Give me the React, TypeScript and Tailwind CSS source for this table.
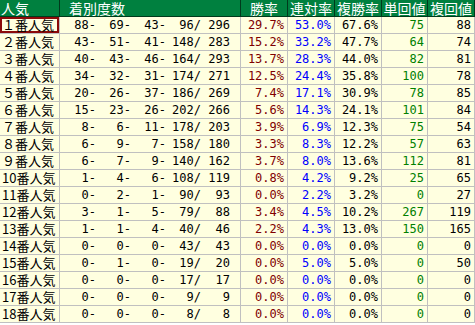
import React from 'react';

type Row = {
  label: string;
  counts: [number, number, number, number, number];
  win: string;
  ren: string;
  fuku: string;
  tan: number;
  fukuKai: number;
};

const rows: Row[] = [
  { label: '１番人気', counts: [88, 69, 43, 96, 296], win: '29.7%', ren: '53.0%', fuku: '67.6%', tan: 75, fukuKai: 88 },
  { label: '２番人気', counts: [43, 51, 41, 148, 283], win: '15.2%', ren: '33.2%', fuku: '47.7%', tan: 64, fukuKai: 74 },
  { label: '３番人気', counts: [40, 43, 46, 164, 293], win: '13.7%', ren: '28.3%', fuku: '44.0%', tan: 82, fukuKai: 81 },
  { label: '４番人気', counts: [34, 32, 31, 174, 271], win: '12.5%', ren: '24.4%', fuku: '35.8%', tan: 100, fukuKai: 78 },
  { label: '５番人気', counts: [20, 26, 37, 186, 269], win: '7.4%', ren: '17.1%', fuku: '30.9%', tan: 78, fukuKai: 85 },
  { label: '６番人気', counts: [15, 23, 26, 202, 266], win: '5.6%', ren: '14.3%', fuku: '24.1%', tan: 101, fukuKai: 84 },
  { label: '７番人気', counts: [8, 6, 11, 178, 203], win: '3.9%', ren: '6.9%', fuku: '12.3%', tan: 75, fukuKai: 54 },
  { label: '８番人気', counts: [6, 9, 7, 158, 180], win: '3.3%', ren: '8.3%', fuku: '12.2%', tan: 57, fukuKai: 63 },
  { label: '９番人気', counts: [6, 7, 9, 140, 162], win: '3.7%', ren: '8.0%', fuku: '13.6%', tan: 112, fukuKai: 81 },
  { label: '10番人気', counts: [1, 4, 6, 108, 119], win: '0.8%', ren: '4.2%', fuku: '9.2%', tan: 25, fukuKai: 65 },
  { label: '11番人気', counts: [0, 2, 1, 90, 93], win: '0.0%', ren: '2.2%', fuku: '3.2%', tan: 0, fukuKai: 27 },
  { label: '12番人気', counts: [3, 1, 5, 79, 88], win: '3.4%', ren: '4.5%', fuku: '10.2%', tan: 267, fukuKai: 119 },
  { label: '13番人気', counts: [1, 1, 4, 40, 46], win: '2.2%', ren: '4.3%', fuku: '13.0%', tan: 150, fukuKai: 165 },
  { label: '14番人気', counts: [0, 0, 0, 43, 43], win: '0.0%', ren: '0.0%', fuku: '0.0%', tan: 0, fukuKai: 0 },
  { label: '15番人気', counts: [0, 1, 0, 19, 20], win: '0.0%', ren: '5.0%', fuku: '5.0%', tan: 0, fukuKai: 50 },
  { label: '16番人気', counts: [0, 0, 0, 17, 17], win: '0.0%', ren: '0.0%', fuku: '0.0%', tan: 0, fukuKai: 0 },
  { label: '17番人気', counts: [0, 0, 0, 9, 9], win: '0.0%', ren: '0.0%', fuku: '0.0%', tan: 0, fukuKai: 0 },
  { label: '18番人気', counts: [0, 0, 0, 8, 8], win: '0.0%', ren: '0.0%', fuku: '0.0%', tan: 0, fukuKai: 0 },
];

const jp = "font-['MS_Gothic','Noto_Sans_CJK_JP',sans-serif]";
const mono = "font-['DejaVu_Sans_Mono','Liberation_Mono',monospace] text-[12px]";
const cols = 'grid grid-cols-[60px_181px_47px_47px_47px_46px_47px]';
const cell = 'h-[17px] border-r border-b border-[#c0c0c0] flex items-center';
const head =
  'h-[17px] border-r border-b border-[#003a1c] flex items-center text-white text-[14px] leading-[16px]';

const App: React.FC = () => {
  return (
    <div className={`w-[475px] bg-white ${jp}`}>
      <div className={`${cols} bg-[#00803f]`}>
        <div className={`${head} pl-px`}>人気</div>
        <div className={`${head} pl-[9px]`}>着別度数</div>
        <div className={`${head} justify-center`}>勝率</div>
        <div className={`${head} justify-center`}>連対率</div>
        <div className={`${head} justify-center`}>複勝率</div>
        <div className={`${head} justify-center`}>単回値</div>
        <div className={`${head} justify-center`}>複回値</div>
      </div>

      {rows.map((r, i) => (
        <div key={r.label} className={`${cols} bg-[#ffffe0] leading-[14px]`}>
          <div
            className={`${cell} pl-[2px] text-[13px] text-black ${
              i === 0 ? 'ring-2 ring-inset ring-[#8b0a0a]' : ''
            }`}
          >
            {r.label}
          </div>
          <div className={`${cell} ${mono} text-black`}>
            <span className="w-[36px] text-right">{r.counts[0]}-</span>
            <span className="w-[35px] text-right">{r.counts[1]}-</span>
            <span className="w-[35px] text-right">{r.counts[2]}-</span>
            <span className="w-[35px] text-right">{r.counts[3]}/</span>
            <span className="w-[29px] text-right">{r.counts[4]}</span>
          </div>
          <div className={`${cell} ${mono} justify-end pr-[3px] text-[#800000]`}>{r.win}</div>
          <div className={`${cell} ${mono} justify-end pr-[3px] text-[#0000ff]`}>{r.ren}</div>
          <div className={`${cell} ${mono} justify-end pr-[3px] text-black`}>{r.fuku}</div>
          <div className={`${cell} ${mono} justify-end pr-[3px] text-[#008000]`}>{r.tan}</div>
          <div className={`${cell} ${mono} justify-end pr-[3px] text-black`}>{r.fukuKai}</div>
        </div>
      ))}
    </div>
  );
};

export default App;
